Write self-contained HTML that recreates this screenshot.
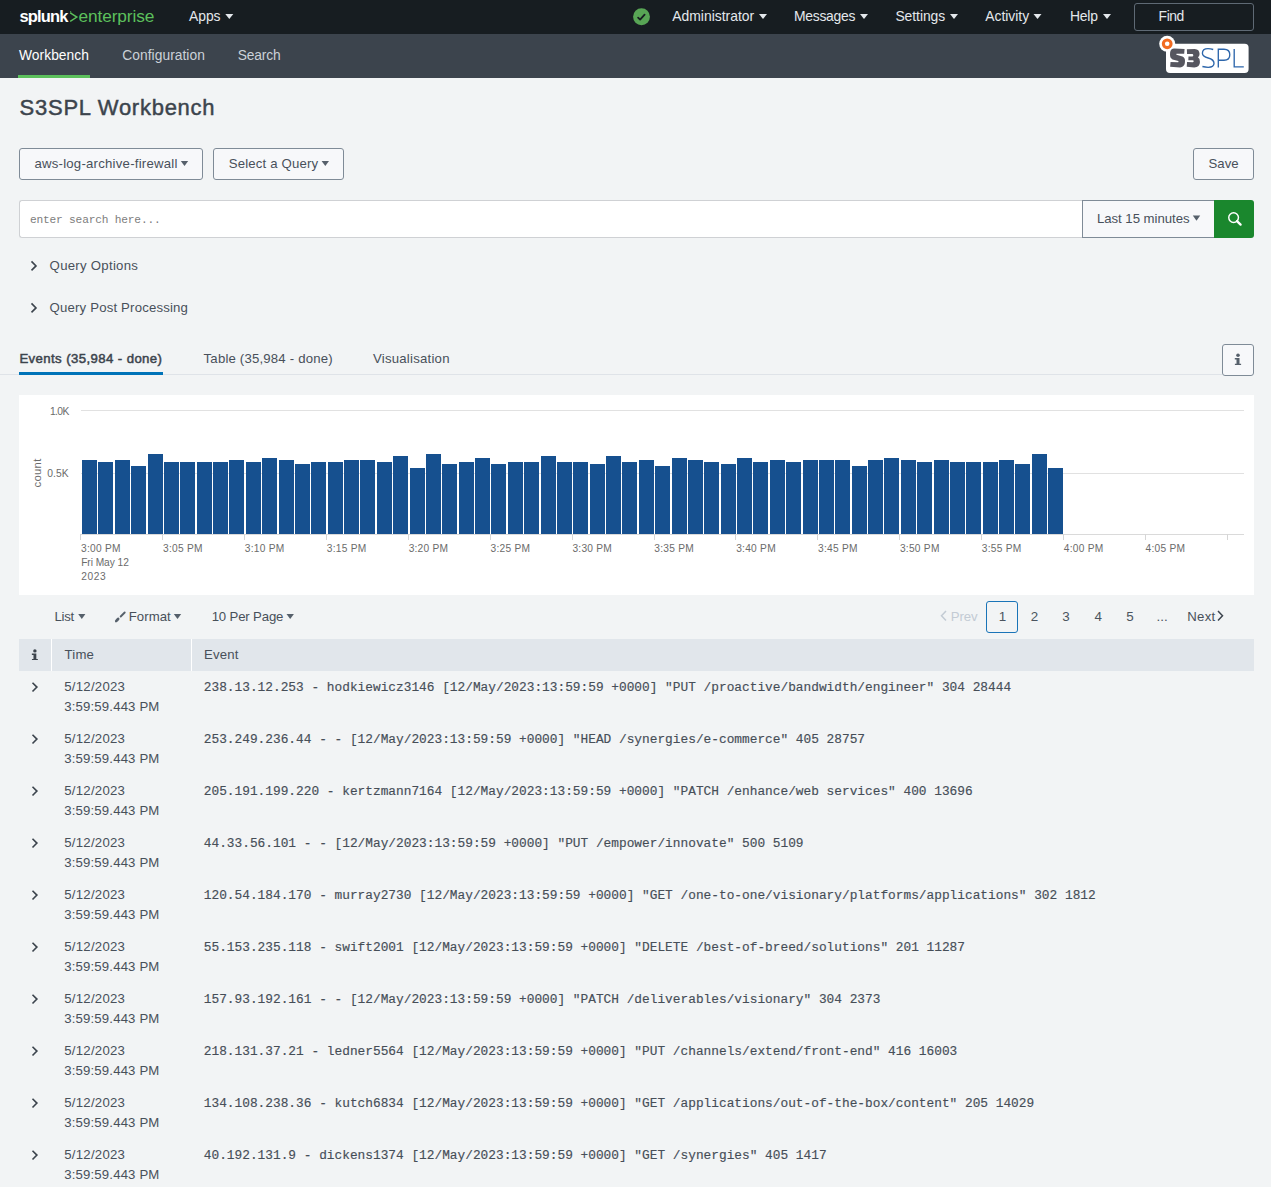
<!DOCTYPE html>
<html><head><meta charset="utf-8"><style>
html,body{margin:0;padding:0;width:1271px;height:1187px;overflow:hidden;background:#f2f4f5;font-family:'Liberation Sans', sans-serif}
.t{position:absolute;white-space:pre}
</style></head><body>
<div style="position:absolute;left:0px;top:0px;width:1271px;height:34px;box-sizing:border-box;background:#171d21"></div>
<svg style="position:absolute;left:0;top:0;overflow:visible" width="1" height="1"><path d="M70.2,12.8 L76.9,17.1 L70.2,21.3" stroke="#5cc05c" stroke-width="1.4" fill="none"/><path d="M70.6,11.2 L70.9,12.6" stroke="#5cc05c" stroke-width="1"/></svg>
<svg style="position:absolute;left:0;top:0;overflow:visible" width="1" height="1"><path d="M225.30,14.00 L233.30,14.00 L229.30,19.00 Z" fill="#e4e8ec"/></svg>
<svg style="position:absolute;left:633px;top:8px" width="18" height="18" viewBox="0 0 18 18"><circle cx="8.5" cy="8.8" r="8.45" fill="#58a555"/><path d="M5.1 9.6 L7.1 11.6 L11.6 6.6" stroke="#171d21" stroke-width="1.8" fill="none" stroke-linecap="round" stroke-linejoin="round"/></svg>
<svg style="position:absolute;left:0;top:0;overflow:visible" width="1" height="1"><path d="M759.00,14.00 L767.00,14.00 L763.00,19.00 Z" fill="#e4e8ec"/></svg>
<svg style="position:absolute;left:0;top:0;overflow:visible" width="1" height="1"><path d="M860.00,14.00 L868.00,14.00 L864.00,19.00 Z" fill="#e4e8ec"/></svg>
<svg style="position:absolute;left:0;top:0;overflow:visible" width="1" height="1"><path d="M950.00,14.00 L958.00,14.00 L954.00,19.00 Z" fill="#e4e8ec"/></svg>
<svg style="position:absolute;left:0;top:0;overflow:visible" width="1" height="1"><path d="M1033.50,14.00 L1041.50,14.00 L1037.50,19.00 Z" fill="#e4e8ec"/></svg>
<svg style="position:absolute;left:0;top:0;overflow:visible" width="1" height="1"><path d="M1103.00,14.00 L1111.00,14.00 L1107.00,19.00 Z" fill="#e4e8ec"/></svg>
<div style="position:absolute;left:1134px;top:3px;width:120px;height:28px;box-sizing:border-box;border:1px solid #5f6a75;border-radius:3px"></div>
<div style="position:absolute;left:0px;top:34px;width:1271px;height:44px;box-sizing:border-box;background:#3c444d"></div>
<div style="position:absolute;left:18px;top:75px;width:72px;height:3px;box-sizing:border-box;background:#5cc05c"></div>
<svg style="position:absolute;left:1155px;top:34px" width="100" height="44" viewBox="0 0 100 44">
<rect x="11" y="9.8" width="82.6" height="29.2" rx="4" fill="#ffffff"/>
<circle cx="12.2" cy="9.8" r="8" fill="#ffffff"/>
<circle cx="12.2" cy="9.8" r="5.4" fill="#f26b21"/>
<circle cx="12.2" cy="9.8" r="2.3" fill="#ffffff"/>
<g transform="translate(13,12) scale(0.026752)" fill="#56565f">
<path d="M230,90 L620,115 L605,290 L320,290 Q295,300 320,330 L540,395 Q640,440 635,560 L630,640 Q610,790 450,800 L80,775 L95,600 L380,605 Q405,595 385,565 L170,500 Q75,460 75,330 L80,230 Q100,95 230,90 Z"/>
<path d="M705,120 L1000,112 Q1175,120 1180,300 Q1178,390 1120,425 Q1195,470 1195,600 Q1190,800 980,805 L700,780 L712,600 L925,605 Q965,600 962,565 Q958,535 920,535 L760,535 L765,390 L915,388 Q948,385 946,345 Q942,300 905,300 L712,295 Z"/>
</g>
<g stroke="#2d66ab" stroke-width="1.35" fill="none">
<path d="M58.2,15.5 C56.5,14.9 54.8,14.6 53,14.6 C49.5,14.6 47.4,16.6 47.4,19.3 C47.4,22.3 50.2,23.2 53.2,24 C56.8,25 59,26.4 59,29.3 C59,31.9 56.8,33.3 53.2,33.3 C51,33.3 49.2,33 47.4,32.5"/>
<path d="M63.3,33.4 L63.3,15.2 L69,15.2 C72.8,15.2 74.8,17.5 74.8,20.7 C74.8,24 72.8,26.2 69,26.2 L63.3,26.2"/>
<path d="M79.2,15 L79.2,32.8 L88.8,32.8"/>
</g>
</svg>
<div style="position:absolute;left:0px;top:78px;width:1271px;height:1109px;box-sizing:border-box;background:#f2f4f5"></div>
<div style="position:absolute;left:19px;top:148px;width:184px;height:32px;box-sizing:border-box;border:1px solid #7f8b97;border-radius:3px;background:#f7f8fa"></div>
<svg style="position:absolute;left:0;top:0;overflow:visible" width="1" height="1"><path d="M180.80,160.90 L188.20,160.90 L184.50,166.10 Z" fill="#56606b"/></svg>
<div style="position:absolute;left:213px;top:148px;width:131px;height:32px;box-sizing:border-box;border:1px solid #7f8b97;border-radius:3px;background:#f7f8fa"></div>
<svg style="position:absolute;left:0;top:0;overflow:visible" width="1" height="1"><path d="M321.60,160.90 L329.00,160.90 L325.30,166.10 Z" fill="#56606b"/></svg>
<div style="position:absolute;left:1193px;top:148px;width:61px;height:32px;box-sizing:border-box;border:1px solid #7f8b97;border-radius:3px;background:#f7f8fa"></div>
<div style="position:absolute;left:19px;top:200px;width:1064px;height:38px;box-sizing:border-box;background:#fff;border:1px solid #cfd1d4;border-right:none;border-radius:3px 0 0 3px"></div>
<div style="position:absolute;left:1082px;top:200px;width:133px;height:38px;box-sizing:border-box;border:1px solid #7f8b97;background:#f7f8fa"></div>
<svg style="position:absolute;left:0;top:0;overflow:visible" width="1" height="1"><path d="M1192.80,215.60 L1200.20,215.60 L1196.50,220.80 Z" fill="#56606b"/></svg>
<div style="position:absolute;left:1214px;top:200px;width:40px;height:38px;box-sizing:border-box;background:#1a872d;border-radius:0 3px 3px 0"></div>
<svg style="position:absolute;left:1214px;top:200px" width="40" height="38" viewBox="0 0 40 38"><circle cx="19.6" cy="17.6" r="4.85" stroke="#fff" stroke-width="1.45" fill="none"/><path d="M23 21.1 L26.6 24.6" stroke="#fff" stroke-width="2.3" stroke-linecap="round"/></svg>
<svg style="position:absolute;left:28px;top:258px" width="14" height="14" viewBox="0 0 14 14"><path d="M3.5 3.4 L8 7.9 L3.5 12.4" stroke="#3c444d" stroke-width="1.6" fill="none"/></svg>
<svg style="position:absolute;left:28px;top:300px" width="14" height="14" viewBox="0 0 14 14"><path d="M3.5 3.4 L8 7.9 L3.5 12.4" stroke="#3c444d" stroke-width="1.6" fill="none"/></svg>
<div style="position:absolute;left:0px;top:374px;width:1222px;height:1px;box-sizing:border-box;background:#dfe3e8"></div>
<div style="position:absolute;left:19px;top:372px;width:144px;height:3px;box-sizing:border-box;background:#0073b8"></div>
<div style="position:absolute;left:1222px;top:344px;width:32px;height:32px;box-sizing:border-box;border:1px solid #7f8b97;border-radius:3px;background:#f7f8fa"></div>
<svg style="position:absolute;left:0;top:0;overflow:visible" width="1" height="1"><circle cx="1238.00" cy="355.30" r="1.80" fill="#56606b"/><path d="M1234.80,358.10 L1239.50,358.10 L1239.50,363.70 L1241.10,363.70 L1241.10,365.00 L1234.90,365.00 L1234.90,363.70 L1236.50,363.70 L1236.50,359.60 L1234.80,359.60 Z" fill="#56606b"/></svg>
<div style="position:absolute;left:19px;top:395px;width:1235px;height:200px;box-sizing:border-box;background:#ffffff"></div>
<svg style="position:absolute;left:0;top:0" width="1271" height="1187">
<rect x="81" y="410.0" width="1163" height="1" fill="#e1e1e1"/>
<rect x="81" y="473.0" width="1163" height="1" fill="#e1e1e1"/>
<rect x="81" y="534" width="1163" height="1" fill="#dadada"/>
<rect x="82" y="460" width="15" height="74" fill="#16508f"/>
<rect x="98" y="462" width="15" height="72" fill="#16508f"/>
<rect x="115" y="460" width="15" height="74" fill="#16508f"/>
<rect x="131" y="466" width="15" height="68" fill="#16508f"/>
<rect x="148" y="454" width="15" height="80" fill="#16508f"/>
<rect x="164" y="462" width="15" height="72" fill="#16508f"/>
<rect x="180" y="462" width="15" height="72" fill="#16508f"/>
<rect x="197" y="462" width="15" height="72" fill="#16508f"/>
<rect x="213" y="462" width="15" height="72" fill="#16508f"/>
<rect x="229" y="460" width="15" height="74" fill="#16508f"/>
<rect x="246" y="462" width="15" height="72" fill="#16508f"/>
<rect x="262" y="458" width="15" height="76" fill="#16508f"/>
<rect x="279" y="460" width="15" height="74" fill="#16508f"/>
<rect x="295" y="464" width="15" height="70" fill="#16508f"/>
<rect x="311" y="462" width="15" height="72" fill="#16508f"/>
<rect x="328" y="462" width="15" height="72" fill="#16508f"/>
<rect x="344" y="460" width="15" height="74" fill="#16508f"/>
<rect x="360" y="460" width="15" height="74" fill="#16508f"/>
<rect x="377" y="462" width="15" height="72" fill="#16508f"/>
<rect x="393" y="456" width="15" height="78" fill="#16508f"/>
<rect x="410" y="468" width="15" height="66" fill="#16508f"/>
<rect x="426" y="454" width="15" height="80" fill="#16508f"/>
<rect x="442" y="464" width="15" height="70" fill="#16508f"/>
<rect x="459" y="462" width="15" height="72" fill="#16508f"/>
<rect x="475" y="458" width="15" height="76" fill="#16508f"/>
<rect x="491" y="464" width="15" height="70" fill="#16508f"/>
<rect x="508" y="462" width="15" height="72" fill="#16508f"/>
<rect x="524" y="462" width="15" height="72" fill="#16508f"/>
<rect x="541" y="456" width="15" height="78" fill="#16508f"/>
<rect x="557" y="462" width="15" height="72" fill="#16508f"/>
<rect x="573" y="462" width="15" height="72" fill="#16508f"/>
<rect x="590" y="464" width="15" height="70" fill="#16508f"/>
<rect x="606" y="456" width="15" height="78" fill="#16508f"/>
<rect x="622" y="462" width="15" height="72" fill="#16508f"/>
<rect x="639" y="460" width="15" height="74" fill="#16508f"/>
<rect x="655" y="466" width="15" height="68" fill="#16508f"/>
<rect x="672" y="458" width="15" height="76" fill="#16508f"/>
<rect x="688" y="460" width="15" height="74" fill="#16508f"/>
<rect x="704" y="462" width="15" height="72" fill="#16508f"/>
<rect x="721" y="464" width="15" height="70" fill="#16508f"/>
<rect x="737" y="458" width="15" height="76" fill="#16508f"/>
<rect x="753" y="462" width="15" height="72" fill="#16508f"/>
<rect x="770" y="460" width="15" height="74" fill="#16508f"/>
<rect x="786" y="462" width="15" height="72" fill="#16508f"/>
<rect x="803" y="460" width="15" height="74" fill="#16508f"/>
<rect x="819" y="460" width="15" height="74" fill="#16508f"/>
<rect x="835" y="460" width="15" height="74" fill="#16508f"/>
<rect x="852" y="466" width="15" height="68" fill="#16508f"/>
<rect x="868" y="460" width="15" height="74" fill="#16508f"/>
<rect x="884" y="458" width="15" height="76" fill="#16508f"/>
<rect x="901" y="460" width="15" height="74" fill="#16508f"/>
<rect x="917" y="462" width="15" height="72" fill="#16508f"/>
<rect x="934" y="460" width="15" height="74" fill="#16508f"/>
<rect x="950" y="462" width="15" height="72" fill="#16508f"/>
<rect x="966" y="462" width="15" height="72" fill="#16508f"/>
<rect x="983" y="462" width="15" height="72" fill="#16508f"/>
<rect x="999" y="460" width="15" height="74" fill="#16508f"/>
<rect x="1015" y="464" width="15" height="70" fill="#16508f"/>
<rect x="1032" y="454" width="15" height="80" fill="#16508f"/>
<rect x="1048" y="468" width="15" height="66" fill="#16508f"/>
<rect x="80" y="534" width="1" height="6" fill="#d6d6d6"/>
<rect x="162" y="534" width="1" height="6" fill="#d6d6d6"/>
<rect x="244" y="534" width="1" height="6" fill="#d6d6d6"/>
<rect x="326" y="534" width="1" height="6" fill="#d6d6d6"/>
<rect x="408" y="534" width="1" height="6" fill="#d6d6d6"/>
<rect x="490" y="534" width="1" height="6" fill="#d6d6d6"/>
<rect x="572" y="534" width="1" height="6" fill="#d6d6d6"/>
<rect x="654" y="534" width="1" height="6" fill="#d6d6d6"/>
<rect x="735" y="534" width="1" height="6" fill="#d6d6d6"/>
<rect x="817" y="534" width="1" height="6" fill="#d6d6d6"/>
<rect x="899" y="534" width="1" height="6" fill="#d6d6d6"/>
<rect x="981" y="534" width="1" height="6" fill="#d6d6d6"/>
<rect x="1063" y="534" width="1" height="6" fill="#d6d6d6"/>
<rect x="1145" y="534" width="1" height="6" fill="#d6d6d6"/>
<rect x="1227" y="534" width="1" height="6" fill="#d6d6d6"/>
</svg>
<div style="position:absolute;left:21px;top:465.5px;width:32px;height:14px;transform:rotate(-90deg);font-family:Liberation Sans;font-size:11.4px;letter-spacing:0.25px;line-height:14px;color:#6b6b6b;text-align:center">count</div>
<svg style="position:absolute;left:0;top:0;overflow:visible" width="1" height="1"><path d="M78.20,613.90 L85.40,613.90 L81.80,619.10 Z" fill="#56606b"/></svg>
<svg style="position:absolute;left:110px;top:605px" width="20" height="20" viewBox="0 0 20 20"><path d="M14.7 7.5 L10.7 11.5" stroke="#56606b" stroke-width="1.9" stroke-linecap="round"/><ellipse cx="7.2" cy="15" rx="2.9" ry="1.45" transform="rotate(-45 7.2 15)" fill="#56606b"/></svg>
<svg style="position:absolute;left:0;top:0;overflow:visible" width="1" height="1"><path d="M173.80,613.90 L181.20,613.90 L177.50,619.10 Z" fill="#56606b"/></svg>
<svg style="position:absolute;left:0;top:0;overflow:visible" width="1" height="1"><path d="M286.50,613.90 L293.90,613.90 L290.20,619.10 Z" fill="#56606b"/></svg>
<svg style="position:absolute;left:938px;top:609px" width="12" height="14" viewBox="0 0 12 14"><path d="M8 2 L3.5 6.8 L8 11.5" stroke="#c3cbd4" stroke-width="1.5" fill="none"/></svg>
<div style="position:absolute;left:986px;top:601px;width:32px;height:32px;box-sizing:border-box;border:1px solid #1a74b8;border-radius:3px"></div>
<svg style="position:absolute;left:1214px;top:609px" width="12" height="14" viewBox="0 0 12 14"><path d="M4 2 L8.5 6.8 L4 11.5" stroke="#3c444d" stroke-width="1.5" fill="none"/></svg>
<div style="position:absolute;left:19px;top:639px;width:1235px;height:32px;box-sizing:border-box;background:#ffffff"></div>
<div style="position:absolute;left:19px;top:639px;width:32px;height:32px;box-sizing:border-box;background:#e1e6eb"></div>
<div style="position:absolute;left:52px;top:639px;width:139px;height:32px;box-sizing:border-box;background:#e1e6eb"></div>
<div style="position:absolute;left:192px;top:639px;width:1062px;height:32px;box-sizing:border-box;background:#e1e6eb"></div>
<svg style="position:absolute;left:0;top:0;overflow:visible" width="1" height="1"><circle cx="34.90" cy="650.90" r="1.71" fill="#3c444d"/><path d="M31.86,653.56 L36.32,653.56 L36.32,658.88 L37.84,658.88 L37.84,660.12 L31.95,660.12 L31.95,658.88 L33.48,658.88 L33.48,654.99 L31.86,654.99 Z" fill="#3c444d"/></svg>
<svg style="position:absolute;left:28px;top:678.6px" width="14" height="14" viewBox="0 0 14 14"><path d="M4.5 3.7 L8.9 8.1 L4.5 12.5" stroke="#3c444d" stroke-width="1.6" fill="none"/></svg>
<svg style="position:absolute;left:28px;top:730.6px" width="14" height="14" viewBox="0 0 14 14"><path d="M4.5 3.7 L8.9 8.1 L4.5 12.5" stroke="#3c444d" stroke-width="1.6" fill="none"/></svg>
<svg style="position:absolute;left:28px;top:782.6px" width="14" height="14" viewBox="0 0 14 14"><path d="M4.5 3.7 L8.9 8.1 L4.5 12.5" stroke="#3c444d" stroke-width="1.6" fill="none"/></svg>
<svg style="position:absolute;left:28px;top:834.6px" width="14" height="14" viewBox="0 0 14 14"><path d="M4.5 3.7 L8.9 8.1 L4.5 12.5" stroke="#3c444d" stroke-width="1.6" fill="none"/></svg>
<svg style="position:absolute;left:28px;top:886.6px" width="14" height="14" viewBox="0 0 14 14"><path d="M4.5 3.7 L8.9 8.1 L4.5 12.5" stroke="#3c444d" stroke-width="1.6" fill="none"/></svg>
<svg style="position:absolute;left:28px;top:938.6px" width="14" height="14" viewBox="0 0 14 14"><path d="M4.5 3.7 L8.9 8.1 L4.5 12.5" stroke="#3c444d" stroke-width="1.6" fill="none"/></svg>
<svg style="position:absolute;left:28px;top:990.6px" width="14" height="14" viewBox="0 0 14 14"><path d="M4.5 3.7 L8.9 8.1 L4.5 12.5" stroke="#3c444d" stroke-width="1.6" fill="none"/></svg>
<svg style="position:absolute;left:28px;top:1042.6px" width="14" height="14" viewBox="0 0 14 14"><path d="M4.5 3.7 L8.9 8.1 L4.5 12.5" stroke="#3c444d" stroke-width="1.6" fill="none"/></svg>
<svg style="position:absolute;left:28px;top:1094.6px" width="14" height="14" viewBox="0 0 14 14"><path d="M4.5 3.7 L8.9 8.1 L4.5 12.5" stroke="#3c444d" stroke-width="1.6" fill="none"/></svg>
<svg style="position:absolute;left:28px;top:1146.6px" width="14" height="14" viewBox="0 0 14 14"><path d="M4.5 3.7 L8.9 8.1 L4.5 12.5" stroke="#3c444d" stroke-width="1.6" fill="none"/></svg>
<div id="t0" class="t" style="left:19.40px;top:4.70px;font-size:16.5px;line-height:23px;color:#ffffff;font-weight:bold;font-family:'Liberation Sans', sans-serif;letter-spacing:-0.831px;">splunk</div>
<div id="t1" class="t" style="left:78.40px;top:4.20px;font-size:17.3px;line-height:24px;color:#5cc05c;font-weight:normal;font-family:'Liberation Sans', sans-serif;letter-spacing:-0.086px;">enterprise</div>
<div id="t2" class="t" style="left:189.00px;top:7.00px;font-size:13.9px;line-height:19px;color:#e4e8ec;font-weight:normal;font-family:'Liberation Sans', sans-serif;letter-spacing:-0.043px;">Apps</div>
<div id="t3" class="t" style="left:672.20px;top:7.00px;font-size:13.9px;line-height:19px;color:#e4e8ec;font-weight:normal;font-family:'Liberation Sans', sans-serif;letter-spacing:0.013px;">Administrator</div>
<div id="t4" class="t" style="left:793.90px;top:7.00px;font-size:13.9px;line-height:19px;color:#e4e8ec;font-weight:normal;font-family:'Liberation Sans', sans-serif;letter-spacing:-0.239px;">Messages</div>
<div id="t5" class="t" style="left:895.40px;top:7.00px;font-size:13.9px;line-height:19px;color:#e4e8ec;font-weight:normal;font-family:'Liberation Sans', sans-serif;letter-spacing:-0.050px;">Settings</div>
<div id="t6" class="t" style="left:985.20px;top:7.00px;font-size:13.9px;line-height:19px;color:#e4e8ec;font-weight:normal;font-family:'Liberation Sans', sans-serif;letter-spacing:0.000px;">Activity</div>
<div id="t7" class="t" style="left:1069.90px;top:7.00px;font-size:13.9px;line-height:19px;color:#e4e8ec;font-weight:normal;font-family:'Liberation Sans', sans-serif;letter-spacing:-0.145px;">Help</div>
<div id="t8" class="t" style="left:1158.60px;top:7.00px;font-size:13.9px;line-height:19px;color:#e4e8ec;font-weight:normal;font-family:'Liberation Sans', sans-serif;letter-spacing:-0.433px;">Find</div>
<div id="t9" class="t" style="left:19.00px;top:46.00px;font-size:13.8px;line-height:19px;color:#ffffff;font-weight:normal;font-family:'Liberation Sans', sans-serif;letter-spacing:0.052px;">Workbench</div>
<div id="t10" class="t" style="left:122.30px;top:46.00px;font-size:13.8px;line-height:19px;color:#cbd1d8;font-weight:normal;font-family:'Liberation Sans', sans-serif;letter-spacing:0.040px;">Configuration</div>
<div id="t11" class="t" style="left:237.80px;top:46.00px;font-size:13.8px;line-height:19px;color:#cbd1d8;font-weight:normal;font-family:'Liberation Sans', sans-serif;letter-spacing:-0.186px;">Search</div>
<div id="t12" class="t" style="left:19.60px;top:92.00px;font-size:22px;line-height:31px;color:#3c444d;font-weight:normal;font-family:'Liberation Sans', sans-serif;letter-spacing:0.735px;-webkit-text-stroke:0.45px #3c444d">S3SPL Workbench</div>
<div id="t13" class="t" style="left:34.40px;top:154.80px;font-size:13.2px;line-height:18px;color:#48505a;font-weight:normal;font-family:'Liberation Sans', sans-serif;letter-spacing:0.226px;">aws-log-archive-firewall</div>
<div id="t14" class="t" style="left:228.70px;top:154.80px;font-size:13.2px;line-height:18px;color:#48505a;font-weight:normal;font-family:'Liberation Sans', sans-serif;letter-spacing:0.176px;">Select a Query</div>
<div id="t15" class="t" style="left:1208.60px;top:155.30px;font-size:13.2px;line-height:18px;color:#48505a;font-weight:normal;font-family:'Liberation Sans', sans-serif;letter-spacing:-0.016px;">Save</div>
<div id="t16" class="t" style="left:29.90px;top:212.00px;font-size:11.2px;line-height:16px;color:#7d7d7d;font-weight:normal;font-family:'Liberation Mono', monospace;letter-spacing:-0.184px;">enter search here...</div>
<div id="t17" class="t" style="left:1096.90px;top:209.80px;font-size:13.2px;line-height:18px;color:#48505a;font-weight:normal;font-family:'Liberation Sans', sans-serif;letter-spacing:-0.027px;">Last 15 minutes</div>
<div id="t18" class="t" style="left:49.60px;top:256.50px;font-size:13.2px;line-height:18px;color:#48505a;font-weight:normal;font-family:'Liberation Sans', sans-serif;letter-spacing:0.275px;">Query Options</div>
<div id="t19" class="t" style="left:49.60px;top:298.50px;font-size:13.2px;line-height:18px;color:#48505a;font-weight:normal;font-family:'Liberation Sans', sans-serif;letter-spacing:0.173px;">Query Post Processing</div>
<div id="t20" class="t" style="left:19.40px;top:349.50px;font-size:13.2px;line-height:18px;color:#3c444d;font-weight:normal;font-family:'Liberation Sans', sans-serif;letter-spacing:0.402px;-webkit-text-stroke:0.5px #3c444d">Events (35,984 - done)</div>
<div id="t21" class="t" style="left:203.60px;top:349.50px;font-size:13.2px;line-height:18px;color:#48505a;font-weight:normal;font-family:'Liberation Sans', sans-serif;letter-spacing:0.182px;">Table (35,984 - done)</div>
<div id="t22" class="t" style="left:373.00px;top:349.50px;font-size:13.2px;line-height:18px;color:#48505a;font-weight:normal;font-family:'Liberation Sans', sans-serif;letter-spacing:0.222px;">Visualisation</div>
<div id="t23" class="t" style="left:81.10px;top:542.40px;font-size:10.2px;line-height:14px;color:#6b6b6b;font-weight:normal;font-family:'Liberation Sans', sans-serif;letter-spacing:0.250px;">3:00 PM</div>
<div id="t24" class="t" style="left:162.99px;top:542.40px;font-size:10.2px;line-height:14px;color:#6b6b6b;font-weight:normal;font-family:'Liberation Sans', sans-serif;letter-spacing:0.250px;">3:05 PM</div>
<div id="t25" class="t" style="left:244.87px;top:542.40px;font-size:10.2px;line-height:14px;color:#6b6b6b;font-weight:normal;font-family:'Liberation Sans', sans-serif;letter-spacing:0.250px;">3:10 PM</div>
<div id="t26" class="t" style="left:326.75px;top:542.40px;font-size:10.2px;line-height:14px;color:#6b6b6b;font-weight:normal;font-family:'Liberation Sans', sans-serif;letter-spacing:0.250px;">3:15 PM</div>
<div id="t27" class="t" style="left:408.64px;top:542.40px;font-size:10.2px;line-height:14px;color:#6b6b6b;font-weight:normal;font-family:'Liberation Sans', sans-serif;letter-spacing:0.250px;">3:20 PM</div>
<div id="t28" class="t" style="left:490.52px;top:542.40px;font-size:10.2px;line-height:14px;color:#6b6b6b;font-weight:normal;font-family:'Liberation Sans', sans-serif;letter-spacing:0.250px;">3:25 PM</div>
<div id="t29" class="t" style="left:572.41px;top:542.40px;font-size:10.2px;line-height:14px;color:#6b6b6b;font-weight:normal;font-family:'Liberation Sans', sans-serif;letter-spacing:0.250px;">3:30 PM</div>
<div id="t30" class="t" style="left:654.30px;top:542.40px;font-size:10.2px;line-height:14px;color:#6b6b6b;font-weight:normal;font-family:'Liberation Sans', sans-serif;letter-spacing:0.250px;">3:35 PM</div>
<div id="t31" class="t" style="left:736.18px;top:542.40px;font-size:10.2px;line-height:14px;color:#6b6b6b;font-weight:normal;font-family:'Liberation Sans', sans-serif;letter-spacing:0.250px;">3:40 PM</div>
<div id="t32" class="t" style="left:818.07px;top:542.40px;font-size:10.2px;line-height:14px;color:#6b6b6b;font-weight:normal;font-family:'Liberation Sans', sans-serif;letter-spacing:0.250px;">3:45 PM</div>
<div id="t33" class="t" style="left:899.95px;top:542.40px;font-size:10.2px;line-height:14px;color:#6b6b6b;font-weight:normal;font-family:'Liberation Sans', sans-serif;letter-spacing:0.250px;">3:50 PM</div>
<div id="t34" class="t" style="left:981.84px;top:542.40px;font-size:10.2px;line-height:14px;color:#6b6b6b;font-weight:normal;font-family:'Liberation Sans', sans-serif;letter-spacing:0.250px;">3:55 PM</div>
<div id="t35" class="t" style="left:1063.72px;top:542.40px;font-size:10.2px;line-height:14px;color:#6b6b6b;font-weight:normal;font-family:'Liberation Sans', sans-serif;letter-spacing:0.250px;">4:00 PM</div>
<div id="t36" class="t" style="left:1145.61px;top:542.40px;font-size:10.2px;line-height:14px;color:#6b6b6b;font-weight:normal;font-family:'Liberation Sans', sans-serif;letter-spacing:0.250px;">4:05 PM</div>
<div id="t37" class="t" style="left:81.20px;top:556.40px;font-size:10.2px;line-height:14px;color:#6b6b6b;font-weight:normal;font-family:'Liberation Sans', sans-serif;letter-spacing:-0.052px;">Fri May 12</div>
<div id="t38" class="t" style="left:81.20px;top:570.20px;font-size:10.2px;line-height:14px;color:#6b6b6b;font-weight:normal;font-family:'Liberation Sans', sans-serif;letter-spacing:0.632px;">2023</div>
<div id="t39" class="t" style="left:49.90px;top:405.30px;font-size:10.3px;line-height:14px;color:#6b6b6b;font-weight:normal;font-family:'Liberation Sans', sans-serif;letter-spacing:-0.597px;">1.0K</div>
<div id="t40" class="t" style="left:47.20px;top:467.20px;font-size:10.3px;line-height:14px;color:#6b6b6b;font-weight:normal;font-family:'Liberation Sans', sans-serif;letter-spacing:0.053px;">0.5K</div>
<div id="t41" class="t" style="left:54.40px;top:607.70px;font-size:13.2px;line-height:18px;color:#48505a;font-weight:normal;font-family:'Liberation Sans', sans-serif;letter-spacing:-0.233px;">List</div>
<div id="t42" class="t" style="left:128.80px;top:607.70px;font-size:13.2px;line-height:18px;color:#48505a;font-weight:normal;font-family:'Liberation Sans', sans-serif;letter-spacing:0.022px;">Format</div>
<div id="t43" class="t" style="left:211.70px;top:607.70px;font-size:13.2px;line-height:18px;color:#48505a;font-weight:normal;font-family:'Liberation Sans', sans-serif;letter-spacing:-0.157px;">10 Per Page</div>
<div id="t44" class="t" style="left:950.70px;top:607.70px;font-size:13.2px;line-height:18px;color:#c3cbd4;font-weight:normal;font-family:'Liberation Sans', sans-serif;letter-spacing:-0.056px;">Prev</div>
<div id="t45" class="t" style="left:952.40px;width:100px;text-align:center;top:607.40px;font-size:13.4px;line-height:19px;color:#4b545e;font-weight:normal;font-family:'Liberation Sans', sans-serif">1</div>
<div id="t46" class="t" style="left:984.40px;width:100px;text-align:center;top:607.40px;font-size:13.4px;line-height:19px;color:#4b545e;font-weight:normal;font-family:'Liberation Sans', sans-serif">2</div>
<div id="t47" class="t" style="left:1016.00px;width:100px;text-align:center;top:607.40px;font-size:13.4px;line-height:19px;color:#4b545e;font-weight:normal;font-family:'Liberation Sans', sans-serif">3</div>
<div id="t48" class="t" style="left:1048.30px;width:100px;text-align:center;top:607.40px;font-size:13.4px;line-height:19px;color:#4b545e;font-weight:normal;font-family:'Liberation Sans', sans-serif">4</div>
<div id="t49" class="t" style="left:1080.00px;width:100px;text-align:center;top:607.40px;font-size:13.4px;line-height:19px;color:#4b545e;font-weight:normal;font-family:'Liberation Sans', sans-serif">5</div>
<div id="t50" class="t" style="left:1112.20px;width:100px;text-align:center;top:607.40px;font-size:13.4px;line-height:19px;color:#4b545e;font-weight:normal;font-family:'Liberation Sans', sans-serif">...</div>
<div id="t51" class="t" style="left:1187.30px;top:607.70px;font-size:13.2px;line-height:18px;color:#48505a;font-weight:normal;font-family:'Liberation Sans', sans-serif;letter-spacing:0.244px;">Next</div>
<div id="t52" class="t" style="left:64.60px;top:645.60px;font-size:13.2px;line-height:18px;color:#48505a;font-weight:normal;font-family:'Liberation Sans', sans-serif;letter-spacing:0.168px;">Time</div>
<div id="t53" class="t" style="left:204.00px;top:645.60px;font-size:13.2px;line-height:18px;color:#48505a;font-weight:normal;font-family:'Liberation Sans', sans-serif;letter-spacing:0.153px;">Event</div>
<div id="t54" class="t" style="left:64.30px;top:677.60px;font-size:13.2px;line-height:18px;color:#48505a;font-weight:normal;font-family:'Liberation Sans', sans-serif;letter-spacing:0.236px;">5/12/2023</div>
<div id="t55" class="t" style="left:64.30px;top:697.60px;font-size:13.2px;line-height:18px;color:#48505a;font-weight:normal;font-family:'Liberation Sans', sans-serif;letter-spacing:0.148px;">3:59:59.443 PM</div>
<div id="t56" class="t" style="left:203.80px;top:678.50px;font-size:12.82px;line-height:18px;color:#48505a;font-weight:normal;font-family:'Liberation Mono', monospace;letter-spacing:0.000px;-webkit-text-stroke:0.15px #3c444d">238.13.12.253 - hodkiewicz3146 [12/May/2023:13:59:59 +0000] "PUT /proactive/bandwidth/engineer" 304 28444</div>
<div id="t57" class="t" style="left:64.30px;top:729.60px;font-size:13.2px;line-height:18px;color:#48505a;font-weight:normal;font-family:'Liberation Sans', sans-serif;letter-spacing:0.236px;">5/12/2023</div>
<div id="t58" class="t" style="left:64.30px;top:749.60px;font-size:13.2px;line-height:18px;color:#48505a;font-weight:normal;font-family:'Liberation Sans', sans-serif;letter-spacing:0.148px;">3:59:59.443 PM</div>
<div id="t59" class="t" style="left:203.80px;top:730.50px;font-size:12.82px;line-height:18px;color:#48505a;font-weight:normal;font-family:'Liberation Mono', monospace;letter-spacing:0.000px;-webkit-text-stroke:0.15px #3c444d">253.249.236.44 - - [12/May/2023:13:59:59 +0000] "HEAD /synergies/e-commerce" 405 28757</div>
<div id="t60" class="t" style="left:64.30px;top:781.60px;font-size:13.2px;line-height:18px;color:#48505a;font-weight:normal;font-family:'Liberation Sans', sans-serif;letter-spacing:0.236px;">5/12/2023</div>
<div id="t61" class="t" style="left:64.30px;top:801.60px;font-size:13.2px;line-height:18px;color:#48505a;font-weight:normal;font-family:'Liberation Sans', sans-serif;letter-spacing:0.148px;">3:59:59.443 PM</div>
<div id="t62" class="t" style="left:203.80px;top:782.50px;font-size:12.82px;line-height:18px;color:#48505a;font-weight:normal;font-family:'Liberation Mono', monospace;letter-spacing:0.000px;-webkit-text-stroke:0.15px #3c444d">205.191.199.220 - kertzmann7164 [12/May/2023:13:59:59 +0000] "PATCH /enhance/web services" 400 13696</div>
<div id="t63" class="t" style="left:64.30px;top:833.60px;font-size:13.2px;line-height:18px;color:#48505a;font-weight:normal;font-family:'Liberation Sans', sans-serif;letter-spacing:0.236px;">5/12/2023</div>
<div id="t64" class="t" style="left:64.30px;top:853.60px;font-size:13.2px;line-height:18px;color:#48505a;font-weight:normal;font-family:'Liberation Sans', sans-serif;letter-spacing:0.148px;">3:59:59.443 PM</div>
<div id="t65" class="t" style="left:203.80px;top:834.50px;font-size:12.82px;line-height:18px;color:#48505a;font-weight:normal;font-family:'Liberation Mono', monospace;letter-spacing:0.000px;-webkit-text-stroke:0.15px #3c444d">44.33.56.101 - - [12/May/2023:13:59:59 +0000] "PUT /empower/innovate" 500 5109</div>
<div id="t66" class="t" style="left:64.30px;top:885.60px;font-size:13.2px;line-height:18px;color:#48505a;font-weight:normal;font-family:'Liberation Sans', sans-serif;letter-spacing:0.236px;">5/12/2023</div>
<div id="t67" class="t" style="left:64.30px;top:905.60px;font-size:13.2px;line-height:18px;color:#48505a;font-weight:normal;font-family:'Liberation Sans', sans-serif;letter-spacing:0.148px;">3:59:59.443 PM</div>
<div id="t68" class="t" style="left:203.80px;top:886.50px;font-size:12.82px;line-height:18px;color:#48505a;font-weight:normal;font-family:'Liberation Mono', monospace;letter-spacing:0.000px;-webkit-text-stroke:0.15px #3c444d">120.54.184.170 - murray2730 [12/May/2023:13:59:59 +0000] "GET /one-to-one/visionary/platforms/applications" 302 1812</div>
<div id="t69" class="t" style="left:64.30px;top:937.60px;font-size:13.2px;line-height:18px;color:#48505a;font-weight:normal;font-family:'Liberation Sans', sans-serif;letter-spacing:0.236px;">5/12/2023</div>
<div id="t70" class="t" style="left:64.30px;top:957.60px;font-size:13.2px;line-height:18px;color:#48505a;font-weight:normal;font-family:'Liberation Sans', sans-serif;letter-spacing:0.148px;">3:59:59.443 PM</div>
<div id="t71" class="t" style="left:203.80px;top:938.50px;font-size:12.82px;line-height:18px;color:#48505a;font-weight:normal;font-family:'Liberation Mono', monospace;letter-spacing:0.000px;-webkit-text-stroke:0.15px #3c444d">55.153.235.118 - swift2001 [12/May/2023:13:59:59 +0000] "DELETE /best-of-breed/solutions" 201 11287</div>
<div id="t72" class="t" style="left:64.30px;top:989.60px;font-size:13.2px;line-height:18px;color:#48505a;font-weight:normal;font-family:'Liberation Sans', sans-serif;letter-spacing:0.236px;">5/12/2023</div>
<div id="t73" class="t" style="left:64.30px;top:1009.60px;font-size:13.2px;line-height:18px;color:#48505a;font-weight:normal;font-family:'Liberation Sans', sans-serif;letter-spacing:0.148px;">3:59:59.443 PM</div>
<div id="t74" class="t" style="left:203.80px;top:990.50px;font-size:12.82px;line-height:18px;color:#48505a;font-weight:normal;font-family:'Liberation Mono', monospace;letter-spacing:0.000px;-webkit-text-stroke:0.15px #3c444d">157.93.192.161 - - [12/May/2023:13:59:59 +0000] "PATCH /deliverables/visionary" 304 2373</div>
<div id="t75" class="t" style="left:64.30px;top:1041.60px;font-size:13.2px;line-height:18px;color:#48505a;font-weight:normal;font-family:'Liberation Sans', sans-serif;letter-spacing:0.236px;">5/12/2023</div>
<div id="t76" class="t" style="left:64.30px;top:1061.60px;font-size:13.2px;line-height:18px;color:#48505a;font-weight:normal;font-family:'Liberation Sans', sans-serif;letter-spacing:0.148px;">3:59:59.443 PM</div>
<div id="t77" class="t" style="left:203.80px;top:1042.50px;font-size:12.82px;line-height:18px;color:#48505a;font-weight:normal;font-family:'Liberation Mono', monospace;letter-spacing:0.000px;-webkit-text-stroke:0.15px #3c444d">218.131.37.21 - ledner5564 [12/May/2023:13:59:59 +0000] "PUT /channels/extend/front-end" 416 16003</div>
<div id="t78" class="t" style="left:64.30px;top:1093.60px;font-size:13.2px;line-height:18px;color:#48505a;font-weight:normal;font-family:'Liberation Sans', sans-serif;letter-spacing:0.236px;">5/12/2023</div>
<div id="t79" class="t" style="left:64.30px;top:1113.60px;font-size:13.2px;line-height:18px;color:#48505a;font-weight:normal;font-family:'Liberation Sans', sans-serif;letter-spacing:0.148px;">3:59:59.443 PM</div>
<div id="t80" class="t" style="left:203.80px;top:1094.50px;font-size:12.82px;line-height:18px;color:#48505a;font-weight:normal;font-family:'Liberation Mono', monospace;letter-spacing:0.000px;-webkit-text-stroke:0.15px #3c444d">134.108.238.36 - kutch6834 [12/May/2023:13:59:59 +0000] "GET /applications/out-of-the-box/content" 205 14029</div>
<div id="t81" class="t" style="left:64.30px;top:1145.60px;font-size:13.2px;line-height:18px;color:#48505a;font-weight:normal;font-family:'Liberation Sans', sans-serif;letter-spacing:0.236px;">5/12/2023</div>
<div id="t82" class="t" style="left:64.30px;top:1165.60px;font-size:13.2px;line-height:18px;color:#48505a;font-weight:normal;font-family:'Liberation Sans', sans-serif;letter-spacing:0.148px;">3:59:59.443 PM</div>
<div id="t83" class="t" style="left:203.80px;top:1146.50px;font-size:12.82px;line-height:18px;color:#48505a;font-weight:normal;font-family:'Liberation Mono', monospace;letter-spacing:0.000px;-webkit-text-stroke:0.15px #3c444d">40.192.131.9 - dickens1374 [12/May/2023:13:59:59 +0000] "GET /synergies" 405 1417</div>
</body></html>
